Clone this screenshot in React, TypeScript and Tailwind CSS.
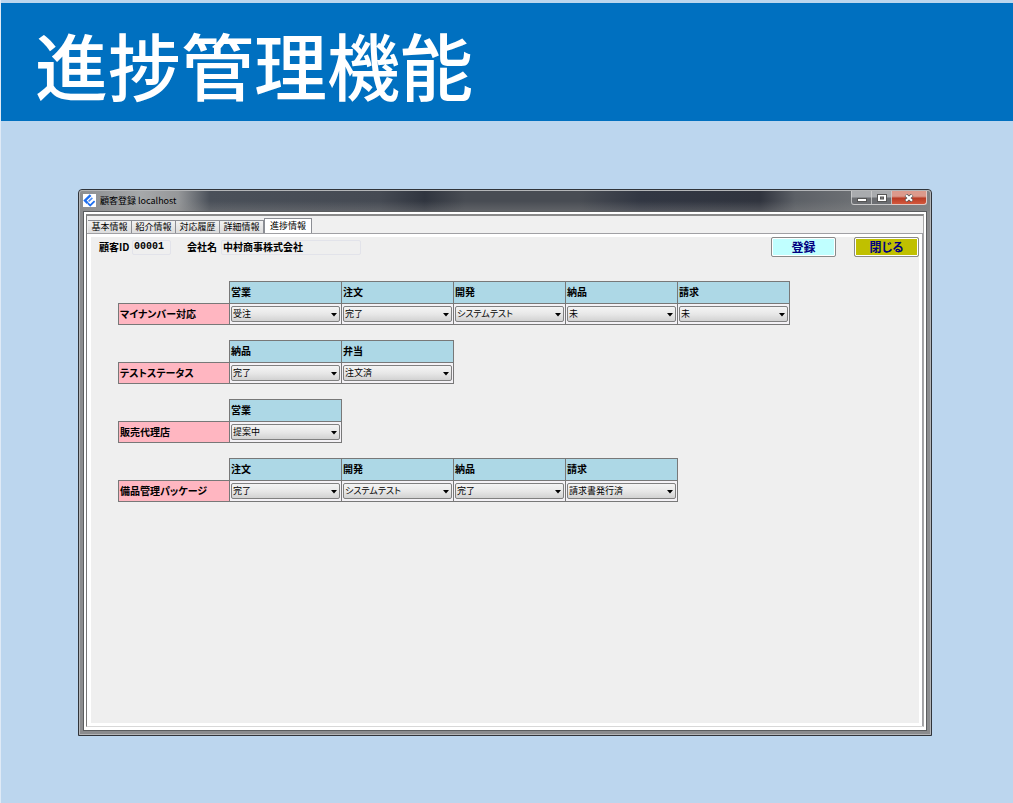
import React from "react";

type Step = { name: string; value: string };
type Progress = { title: string; steps: Step[] };

const tabs = ["基本情報", "紹介情報", "対応履歴", "詳細情報", "進捗情報"];
const choices = ["未", "提案中", "受注", "注文済", "システムテスト", "請求書発行済", "完了"];

const rows: Progress[] = [
  {
    title: "マイナンバー対応",
    steps: [
      { name: "営業", value: "受注" },
      { name: "注文", value: "完了" },
      { name: "開発", value: "システムテスト" },
      { name: "納品", value: "未" },
      { name: "請求", value: "未" },
    ],
  },
  {
    title: "テストステータス",
    steps: [
      { name: "納品", value: "完了" },
      { name: "弁当", value: "注文済" },
    ],
  },
  { title: "販売代理店", steps: [{ name: "営業", value: "提案中" }] },
  {
    title: "備品管理パッケージ",
    steps: [
      { name: "注文", value: "完了" },
      { name: "開発", value: "システムテスト" },
      { name: "納品", value: "完了" },
      { name: "請求", value: "請求書発行済" },
    ],
  },
];

function StepSelect({ label, value }: { label: string; value: string }) {
  return (
    <div className="relative mx-px h-4">
      <select
        aria-label={label}
        defaultValue={value}
        className="block h-4 w-full appearance-none rounded-[2px] border border-[#808080] bg-linear-to-b from-[#f4f4f4] via-[#e8e8e8] to-[#d2d2d2] pr-3 pl-px text-[9px] leading-[14px] text-black"
      >
        {choices.map((c) => (
          <option key={c}>{c}</option>
        ))}
      </select>
      <svg viewBox="0 0 6 4" className="pointer-events-none absolute top-[7px] right-[3px] h-[4px] w-[6px]" aria-hidden="true">
        <path d="M0 0h6L3 3.6z" fill="#000" />
      </svg>
    </div>
  );
}

function ProgressTable({ title, steps }: Progress) {
  return (
    <table className="table-fixed border-collapse self-start text-left text-[10px] leading-[14px]">
      <colgroup>
        <col className="w-[111px]" />
        {steps.map((s) => (
          <col key={s.name} className="w-[112px]" />
        ))}
      </colgroup>
      <thead>
        <tr className="h-[22px]">
          <td className="w-[111px] p-0" />
          {steps.map((s) => (
            <th key={s.name} scope="col" className="w-[112px] border border-[#787878] bg-[#add8e6] p-0 pb-px pl-px font-bold">
              {s.name}
            </th>
          ))}
        </tr>
      </thead>
      <tbody>
        <tr className="h-[21px]">
          <th scope="row" className="border border-[#787878] bg-[#ffb6c1] p-0 pb-px pl-px font-bold whitespace-nowrap">
            {title}
          </th>
          {steps.map((s) => (
            <td key={s.name} className="border border-[#787878] bg-[#f4f2f6] p-0">
              <StepSelect label={`${title} ${s.name}`} value={s.value} />
            </td>
          ))}
        </tr>
      </tbody>
    </table>
  );
}

function TitleBar() {
  const frameButton =
    "flex h-[14px] items-center justify-center border border-t-0 border-[#d0d0d0]/80 bg-linear-to-b from-[#a9abae] from-45% to-[#6c6e72] to-55%";
  return (
    <div className="flex h-[20px] items-start justify-between">
      <div className="flex h-[19px] items-center gap-1">
        <svg viewBox="0 0 13 13" className="size-[13px]" aria-hidden="true">
          <rect width="13" height="13" fill="#fff" />
          <path d="M7.6 1.2 2 6.5l2.6 2.7" fill="none" stroke="#1e6ff0" strokeWidth="2.4" />
          <path d="M9.4 3.8 5.6 7.4" fill="none" stroke="#4c8cf4" strokeWidth="1.6" />
          <path d="M4.8 9.2 7.2 11.4 11.6 7.2" fill="none" stroke="#1e6ff0" strokeWidth="1.8" />
        </svg>
        <span className="text-[9px] leading-[14px] text-black">顧客登録 localhost</span>
      </div>
      <div className="flex">
        <button type="button" aria-label="最小化" className={`${frameButton} w-[21px] rounded-bl-[3px]`}>
          <svg viewBox="0 0 10 8" className="h-2 w-[10px]" aria-hidden="true">
            <rect x="0.5" y="4.5" width="9" height="3" fill="#fff" stroke="#555" />
          </svg>
        </button>
        <button type="button" aria-label="最大化" className={`${frameButton} w-[20px] border-l-0`}>
          <svg viewBox="0 0 10 8" className="h-2 w-[10px]" aria-hidden="true">
            <rect x="0.5" y="0.5" width="9" height="7" fill="#fff" stroke="#555" />
            <rect x="3.5" y="3" width="3" height="2" fill="#888" stroke="#555" />
          </svg>
        </button>
        <button
          type="button"
          aria-label="閉じる"
          className="flex h-[14px] w-[35px] items-center justify-center rounded-br-[3px] border border-t-0 border-l-0 border-[#e0c8c4] bg-linear-to-b from-[#dc9a8c] from-40% via-[#b83c26] via-55% to-[#d4583c]"
        >
          <svg viewBox="0 0 10 8" className="h-2 w-[10px]" aria-hidden="true">
            <path d="M1.8 1 8.2 7M8.2 1 1.8 7" stroke="#555" strokeWidth="3.6" />
            <path d="M2 1.2 8 6.8M8 1.2 2 6.8" stroke="#fff" strokeWidth="2.2" />
          </svg>
        </button>
      </div>
    </div>
  );
}

export default function App() {
  const field =
    "h-[15px] min-w-0 rounded-[2px] border border-[#e2e3ea] bg-[#efefef] pb-px pl-px text-[10px] leading-[12px] font-bold text-black";
  const action =
    "h-5 w-[65px] rounded-[2px] border border-[#8a8a8a] text-xs leading-4 font-bold text-[#000080] ring-1 ring-white ring-inset";
  return (
    <div className="flex min-h-screen flex-col border-l border-[#dfeaf6] bg-[#bcd6ee] pt-[3px] font-['Noto_Sans_CJK_JP',sans-serif] text-black [font-feature-settings:'palt']">
      <header className="flex h-[118px] items-center bg-[#0070c0] pt-[2px] pl-[34px]">
        <h1 className="text-[73px] leading-[80px] font-medium whitespace-nowrap text-white [font-feature-settings:normal]">
          進捗管理機能
        </h1>
      </header>

      <main className="flex flex-1 flex-col pt-[68px] pr-[81px] pb-[67px] pl-[77px]">
        <section className="flex flex-1 flex-col rounded-t-[4px] border border-[#30343a] bg-[#8b8c8e]">
          <div className="flex flex-1 flex-col rounded-t-[3px] border border-[#b4b6b8] bg-[linear-gradient(to_bottom,transparent_0,transparent_10px,rgba(140,140,140,0.35)_20px,#8b8c8e_21px),linear-gradient(to_right,#8c8e90_0,#a6a8aa_60px,#96989a_98px,#4a5059_130px,#454a53_300px,#30353f_345px,#484c53_385px,#484c53_500px,#323743_560px,#30343e_680px,#5c6066_715px,#74777a_800px,#808284_100%)] px-[3px] pb-[3px]">
            <TitleBar />
            <div className="flex flex-1 flex-col border border-[#5a5c5e] bg-white px-[2px] pt-[2px] pb-[3px]">
              <div className="flex flex-1 flex-col border-t-2 border-r border-b border-l border-t-[#8a8a8a] border-r-[#a8a8a8] border-b-[#d8d8d8] border-l-[#787878] bg-[#f0f0f0]">
                <nav role="tablist" className="flex h-[17px] items-end pl-px">
                  {tabs.map((t, i) =>
                    i === tabs.length - 1 ? (
                      <button
                        key={t}
                        role="tab"
                        type="button"
                        aria-selected="true"
                        className="-mb-px h-4 w-[48px] border border-b-0 border-[#8c8e94] bg-white pb-[2px] text-[9px] leading-[12px]"
                      >
                        {t}
                      </button>
                    ) : (
                      <button
                        key={t}
                        role="tab"
                        type="button"
                        aria-selected="false"
                        className="h-[13px] w-[44px] border border-b-0 border-l-0 border-[#8c8e94] bg-linear-to-b from-[#f2f2f2] to-[#dcdcdc] text-[9px] leading-[12px]"
                      >
                        {t}
                      </button>
                    ),
                  )}
                </nav>
                <div role="tabpanel" className="flex flex-1 flex-col border-t border-r border-[#a0a0a4] bg-white pt-[3px] pr-[3px] pb-[3px] pl-[4px]">
                  <form className="flex flex-1 flex-col bg-[#efefef]" onSubmit={(e) => e.preventDefault()}>
                    <div className="flex items-center pl-2 text-[10px] leading-[14px] font-bold">
                      <label htmlFor="customer-id" className="w-[33px] shrink-0 pb-px whitespace-nowrap">
                        顧客ID
                      </label>
                      <input
                        id="customer-id"
                        readOnly
                        defaultValue="00001"
                        className={`${field} w-[39px] font-['Liberation_Mono','Noto_Sans_CJK_JP',monospace]`}
                      />
                      <label htmlFor="company" className="ml-4 w-[34px] shrink-0 pb-px whitespace-nowrap">
                        会社名
                      </label>
                      <input id="company" readOnly defaultValue="中村商事株式会社" className={`${field} w-[140px]`} />
                      <div className="ml-auto flex gap-[18px]">
                        <button type="submit" className={`${action} bg-[#c0ffff]`}>
                          登録
                        </button>
                        <button type="button" className={`${action} bg-[#c0c000]`}>
                          閉じる
                        </button>
                      </div>
                    </div>
                    <div className="flex flex-col gap-[15px] pt-6 pl-[27px]">
                      {rows.map((r) => (
                        <ProgressTable key={r.title} {...r} />
                      ))}
                    </div>
                  </form>
                </div>
              </div>
            </div>
          </div>
        </section>
      </main>
    </div>
  );
}
